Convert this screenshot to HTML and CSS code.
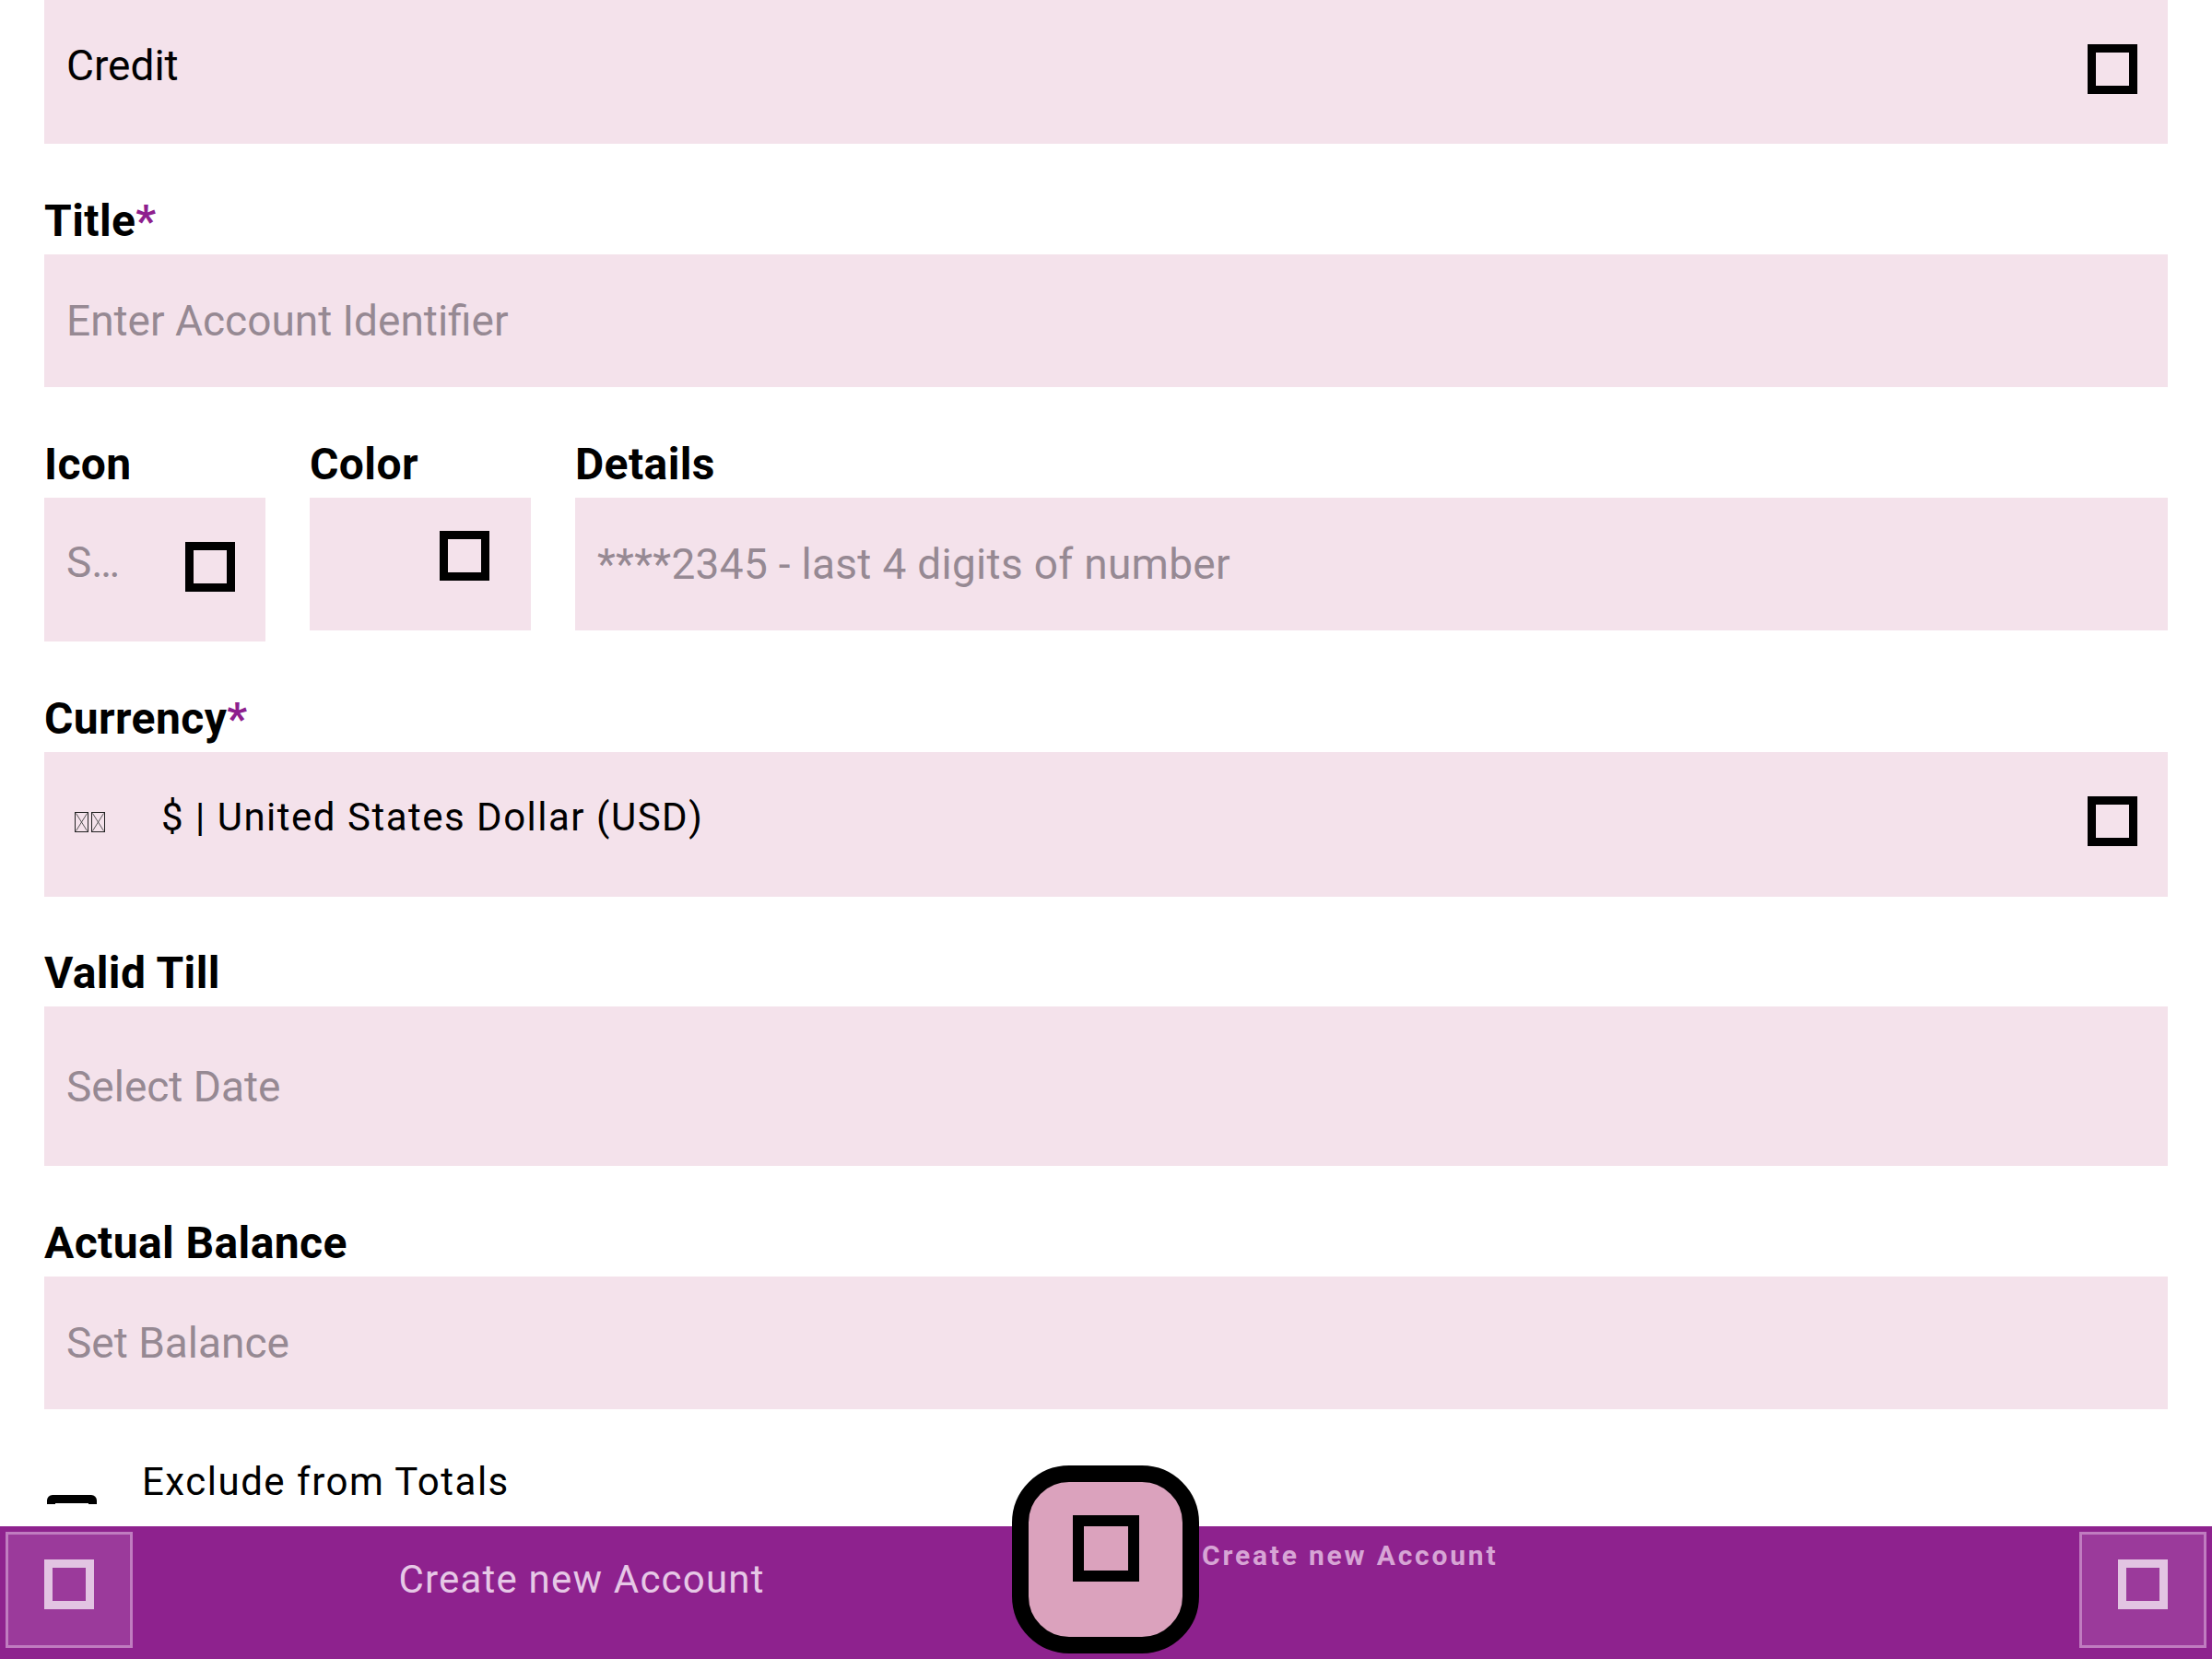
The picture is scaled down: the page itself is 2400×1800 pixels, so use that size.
FILE: index.html
```html
<!DOCTYPE html>
<html lang="en">
<head>
<meta charset="utf-8">
<title>Create new Account</title>
<link rel="stylesheet" href="styles.css">
</head>
<body>
<main class="form">
  <div class="field field-credit">
    <span class="value value-credit">Credit</span>
    <span class="tofu tofu-credit"></span>
  </div>

  <section class="group">
    <div class="label">Title<span class="req">*</span></div>
    <div class="field field-std">
      <span class="placeholder">Enter Account Identifier</span>
    </div>
  </section>

  <section class="group row">
    <div class="col col-icon">
      <div class="label">Icon</div>
      <div class="field field-icon">
        <span class="placeholder placeholder-icon">S…</span>
        <span class="tofu tofu-icon"></span>
      </div>
    </div>
    <div class="col col-color">
      <div class="label">Color</div>
      <div class="field field-color">
        <span class="tofu tofu-color"></span>
      </div>
    </div>
    <div class="col col-details">
      <div class="label">Details</div>
      <div class="field field-std">
        <span class="placeholder placeholder-details">****2345 - last 4 digits of number</span>
      </div>
    </div>
  </section>

  <section class="group">
    <div class="label">Currency<span class="req">*</span></div>
    <div class="field field-currency">
      <span class="flag">
        <svg class="flag-box" width="15" height="22" viewBox="0 0 15 22"><rect x="0.5" y="0.5" width="14" height="21" fill="none" stroke="#222" stroke-width="1"/><path d="M1.5 1.5 L13.5 20.5 M13.5 1.5 L1.5 20.5" stroke="#444" stroke-width="0.9" fill="none"/></svg>
        <svg class="flag-box" width="15" height="22" viewBox="0 0 15 22"><rect x="0.5" y="0.5" width="14" height="21" fill="none" stroke="#222" stroke-width="1"/><path d="M1.5 1.5 L13.5 20.5 M13.5 1.5 L1.5 20.5" stroke="#444" stroke-width="0.9" fill="none"/></svg>
      </span>
      <span class="value value-currency">$ | United States Dollar (USD)</span>
      <span class="tofu tofu-currency"></span>
    </div>
  </section>

  <section class="group group-date">
    <div class="label">Valid Till</div>
    <div class="field field-date">
      <span class="placeholder">Select Date</span>
    </div>
  </section>

  <section class="group">
    <div class="label">Actual Balance</div>
    <div class="field field-std">
      <span class="placeholder">Set Balance</span>
    </div>
  </section>

  <div class="exclude">
    <span class="checkbox"></span>
    <span class="exclude-text">Exclude from Totals</span>
  </div>
</main>

<footer class="bar">
  <div class="nav-btn"><span class="tofu tofu-light"></span></div>
  <div class="bar-title">Create new Account</div>
  <div class="fab-slot">
    <div class="fab"><span class="tofu tofu-fab"></span></div>
  </div>
  <div class="bar-caption">Create new Account</div>
  <div class="nav-btn"><span class="tofu tofu-light"></span></div>
</footer>
</body>
</html>
```

FILE: styles.css
```css
* {
  box-sizing: border-box;
}

html, body {
  margin: 0;
  padding: 0;
  background: #ffffff;
  width: 2400px;
  height: 1800px;
  overflow: hidden;
}

body {
  font-family: Roboto, "Liberation Sans", Arial, sans-serif;
  color: #000;
}

.form {
  padding: 0 48px;
  height: 1632px;
  overflow: hidden;
  display: flex;
  flex-direction: column;
}

.group {
  margin-top: 56px;
  flex: none;
}

.label {
  font-size: 48px;
  font-weight: 700;
  line-height: 56px;
  height: 56px;
  letter-spacing: 0.4px;
  margin-bottom: 8px;
  white-space: nowrap;
}

.req {
  color: #8e1f8e;
}

.field {
  background: #f4e2eb;
  display: flex;
  align-items: center;
  padding-left: 24px;
  flex: none;
}

.field-std {
  height: 144px;
}

.field-credit {
  height: 156px;
  justify-content: space-between;
  padding-right: 33px;
}

.value {
  font-size: 46px;
  line-height: 54px;
  white-space: nowrap;
}

.value-credit {
  padding-bottom: 15px;
}

.placeholder {
  font-size: 46px;
  line-height: 54px;
  color: #968993;
  white-space: nowrap;
}

.placeholder-details {
  letter-spacing: 0.3px;
}

.tofu {
  display: block;
  width: 54px;
  height: 54px;
  border: 9px solid #000;
  flex: none;
}

.tofu-credit {
  margin-bottom: 6px;
}

.row {
  display: flex;
  gap: 48px;
  align-items: flex-start;
}

.col-icon,
.col-color {
  width: 240px;
  flex: none;
}

.col-details {
  flex: 1;
}

.field-icon {
  height: 156px;
  justify-content: space-between;
  padding-right: 33px;
}

.placeholder-icon {
  padding-bottom: 16px;
}

.tofu-icon {
  margin-bottom: 6px;
}

.field-color {
  height: 144px;
  justify-content: flex-end;
  padding-right: 45px;
}

.tofu-color {
  margin-bottom: 18px;
}

.field-currency {
  height: 157px;
  padding-left: 33px;
  padding-right: 33px;
}

.flag {
  display: flex;
  gap: 3px;
  margin-bottom: 6px;
}

.flag-box {
  display: block;
}

.value-currency {
  font-size: 42px;
  line-height: 50px;
  letter-spacing: 1.5px;
  margin-left: 61px;
  padding-bottom: 15px;
  flex: 1;
}

.tofu-currency {
  margin-bottom: 7px;
}

.group-date {
  margin-top: 55px;
}

.field-date {
  height: 173px;
}

.exclude {
  margin-top: 54px;
  display: flex;
  align-items: flex-start;
  flex: none;
}

.checkbox {
  display: block;
  width: 54px;
  height: 54px;
  border: 9px solid #000;
  border-radius: 6px;
  margin-top: 39px;
  margin-left: 3px;
  flex: none;
}

.exclude-text {
  font-size: 42px;
  line-height: 49px;
  letter-spacing: 1.5px;
  margin-left: 49px;
  white-space: nowrap;
}

/* Bottom bar */
.bar {
  position: fixed;
  left: 0;
  bottom: 0;
  width: 2400px;
  height: 144px;
  background: #8e228e;
  display: flex;
  align-items: flex-start;
  padding: 6px 6px 12px 6px;
  z-index: 5;
}

.nav-btn {
  width: 138px;
  height: 126px;
  flex: none;
  background: #9b3a9b;
  border: 3px solid #c07cc0;
  display: flex;
  align-items: center;
  justify-content: center;
  padding-bottom: 12px;
}

.tofu-light {
  border-color: #e2c4e2;
}

.bar-title {
  width: 954px;
  flex: none;
  text-align: center;
  padding-left: 20px;
  margin-top: 27px;
  font-size: 42px;
  line-height: 49px;
  letter-spacing: 1.2px;
  color: #e6c8e6;
  white-space: nowrap;
}

.fab-slot {
  width: 203px;
  height: 126px;
  flex: none;
  position: relative;
}

.fab {
  position: absolute;
  left: 0;
  top: -72px;
  width: 203px;
  height: 204px;
  border: 18px solid #000;
  border-radius: 62px;
  background: #dba2bd;
  display: flex;
  align-items: center;
  justify-content: center;
  padding-bottom: 24px;
}

.tofu-fab {
  width: 72px;
  height: 72px;
  border-width: 12px;
}

.bar-caption {
  flex: 1;
  margin-top: 8px;
  padding-left: 3px;
  font-size: 30px;
  line-height: 35px;
  font-weight: 700;
  letter-spacing: 2.8px;
  color: #d7a5d5;
  white-space: nowrap;
}
```
